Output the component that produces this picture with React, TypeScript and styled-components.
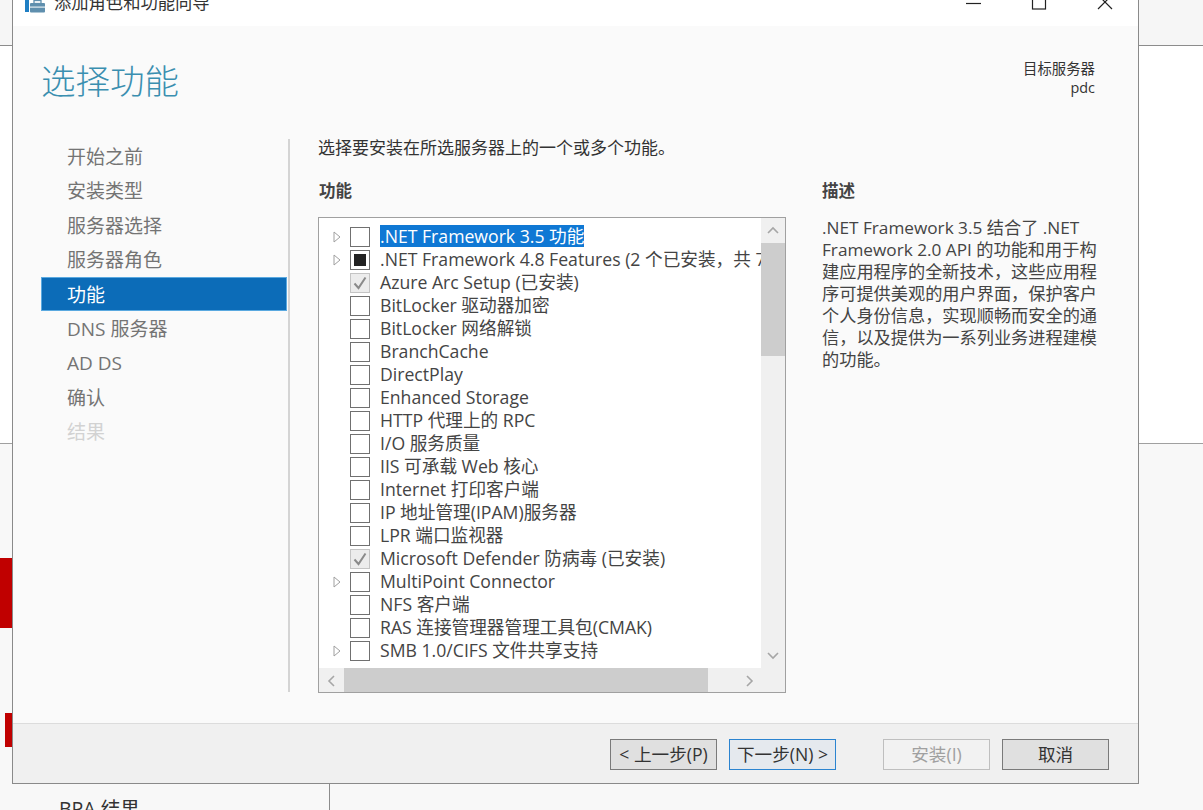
import React from 'react'
import styled, { createGlobalStyle } from 'styled-components'

const Global = createGlobalStyle`
  html, body { margin: 0; padding: 0; height: 100%; overflow: hidden; background: #f8f8f8; }
  body { font-family: "Open Sans", "Noto Sans CJK SC", sans-serif; color: #333; }
`

const Desktop = styled.div`
  position: relative;
  width: 1203px;
  height: 810px;
  overflow: hidden;
  background: #f8f8f8;
  display: grid;
  grid-template-rows: 46px 398px 1fr;
`
const TopBand = styled.div`
  background: #f6f6f6;
  border-bottom: 1px solid #8c8c8c;
`
const WhiteBand = styled.div`
  background: #fff;
  border-bottom: 1px solid #a0a0a0;
`
const BottomBand = styled.div`
  background: #f8f8f8;
`
const RedBlock = styled.div<{ $l: number; $t: number; $h: number; $w: number }>`
  position: absolute;
  left: ${(p) => p.$l}px;
  top: ${(p) => p.$t}px;
  width: ${(p) => p.$w}px;
  height: ${(p) => p.$h}px;
  background: #c00000;
`
const BehindLabel = styled.div`
  position: absolute;
  left: 59px;
  top: 797px;
  font-size: 19.5px;
  line-height: 24px;
  color: #333;
`
const BehindRule = styled.div`
  position: absolute;
  left: 329px;
  top: 784px;
  width: 1px;
  height: 26px;
  background: #8c8c8c;
`

const Window = styled.div`
  position: absolute;
  left: 12px;
  top: -10px;
  width: 1127px;
  height: 794px;
  box-sizing: border-box;
  border: 1px solid #8a8a8a;
  border-top: none;
  background: #fafafa;
  display: flex;
  flex-direction: column;
`
const TitleBar = styled.div`
  height: 36px;
  flex: none;
  background: #fff;
  display: flex;
  align-items: flex-start;
  padding-left: 12px;
`
const TitleIcon = styled.svg`
  width: 20px;
  height: 20px;
  margin-top: 5px;
`
const TitleText = styled.div`
  margin-left: 9px;
  margin-top: 2px;
  font-size: 17.3px;
  line-height: 22px;
  color: #333;
`
const WinButtons = styled.div`
  margin-left: auto;
  display: flex;
  margin-right: 24px;
  gap: 48px;
`
const WinIcon = styled.svg`
  width: 18px;
  height: 20px;
  display: block;
`

const Body = styled.div`
  flex: 1;
  display: flex;
  flex-direction: column;
  min-height: 0;
`
const Header = styled.div`
  height: 111px;
  flex: none;
  display: flex;
  justify-content: space-between;
  padding: 0 43px 0 28px;
`
const PageTitle = styled.h1`
  margin: 30px 0 0;
  font-size: 34.5px;
  line-height: 46px;
  font-weight: 300;
  color: #3a8fb0;
  font-family: "Noto Sans CJK SC", sans-serif;
`
const Target = styled.div`
  margin-top: 33px;
  text-align: right;
  font-size: 14.4px;
  line-height: 19px;
  color: #333;
`

const Columns = styled.div`
  flex: 1;
  display: flex;
  padding-left: 28px;
  min-height: 0;
`
const Side = styled.nav`
  width: 247px;
  flex: none;
  height: 553px;
  border-right: 2px solid #d4d4d4;
  margin-right: 28px;
  margin-top: 2px;
`
const SideItem = styled.div<{ $active?: boolean; $off?: boolean }>`
  width: 246px;
  height: 34.4px;
  box-sizing: border-box;
  padding: 2px 0 0 26px;
  font-size: 19px;
  line-height: 32.4px;
  color: ${(p) => (p.$active ? '#fff' : p.$off ? '#d2d2d2' : '#747474')};
  background: ${(p) => (p.$active ? '#0c6cb8' : 'transparent')};
  box-shadow: ${(p) => (p.$active ? 'inset 0 0 0 1px #5aa9e0' : 'none')};
`

const Main = styled.div`
  width: 468px;
  flex: none;
  display: flex;
  flex-direction: column;
`
const Intro = styled.div`
  font-size: 17px;
  line-height: 22px;
  color: #333;
  height: 22px;
  white-space: nowrap;
`
const SectionHead = styled.div`
  font-size: 16.5px;
  line-height: 22px;
  font-weight: 700;
  color: #444;
`
const ListHead = styled(SectionHead)`
  margin-top: 21px;
  margin-bottom: 15px;
  padding-left: 1px;
`

const ListBox = styled.div`
  width: 468px;
  height: 476px;
  box-sizing: border-box;
  border: 1px solid #a0a0a0;
  background: #fff;
  display: grid;
  grid-template-columns: minmax(0, 1fr) 24px;
  grid-template-rows: minmax(0, 1fr) 24px;
`
const Rows = styled.div`
  overflow: hidden;
  padding-top: 7px;
`
const Row = styled.div`
  height: 23px;
  display: flex;
  align-items: center;
  white-space: nowrap;
  font-size: 17.65px;
  color: #444;
`
const ArrowSlot = styled.div`
  width: 31px;
  flex: none;
  display: flex;
  justify-content: flex-end;
  padding-right: 9px;
  box-sizing: border-box;
`
const CheckBox = styled.div<{ $state?: string }>`
  width: 20px;
  height: 20px;
  flex: none;
  box-sizing: border-box;
  border: 1px solid ${(p) => (p.$state === 'done' ? '#c4c4c4' : '#707070')};
  background: ${(p) => (p.$state === 'done' ? '#ececec' : '#fff')};
  display: flex;
  align-items: center;
  justify-content: center;
  margin-right: 10px;
`
const Dot = styled.div`
  width: 12px;
  height: 12px;
  background: #222;
`
const Label = styled.span<{ $sel?: boolean }>`
  background: ${(p) => (p.$sel ? '#0f78d4' : 'transparent')};
  color: ${(p) => (p.$sel ? '#fff' : 'inherit')};
  line-height: 22px;
  margin-top: -1px;
`

const VBar = styled.div`
  background: #f0f0f0;
  display: flex;
  flex-direction: column;
`
const HBar = styled.div`
  background: #f0f0f0;
  display: flex;
  padding-left: 1px;
`
const Corner = styled.div`
  background: #f0f0f0;
`
const ArrowBtn = styled.div`
  width: 24px;
  height: 25px;
  flex: none;
  display: flex;
  align-items: center;
  justify-content: center;
`
const VThumb = styled.div`
  height: 113px;
  background: #cdcdcd;
`
const HThumb = styled.div`
  width: 364px;
  background: #cdcdcd;
`
const Spacer = styled.div`
  flex: 1;
`

const Desc = styled.div`
  margin-left: 36px;
  width: 290px;
  padding-top: 43px;
`
const DescHead = styled(SectionHead)`
  margin-bottom: 15px;
`
const DescLine = styled.div`
  font-size: 17.2px;
  line-height: 22px;
  white-space: nowrap;
  color: #444;
`

const Footer = styled.div`
  height: 60px;
  flex: none;
  box-sizing: border-box;
  border-top: 1px solid #dcdcdc;
  background: #f0f0f0;
  display: flex;
  padding: 15px 29px 0 0;
  justify-content: flex-end;
`
const Btn = styled.div<{ $kind?: string; $gap?: number }>`
  width: 107px;
  height: 31px;
  box-sizing: border-box;
  margin-left: ${(p) => p.$gap ?? 0}px;
  border: 1px solid ${(p) => (p.$kind === 'focus' ? '#2b84d0' : p.$kind === 'off' ? '#bfbfbf' : '#7a7a7a')};
  background: ${(p) => (p.$kind === 'focus' ? '#e5e9ee' : p.$kind === 'off' ? '#f2f2f2' : '#e0e0e0')};
  color: ${(p) => (p.$kind === 'off' ? '#a0a0a0' : '#333')};
  font-size: 17.6px;
  line-height: 29px;
  text-align: center;
  white-space: nowrap;
`

const rows: { label: string; arrow?: boolean; state?: string; sel?: boolean }[] = [
  { label: '.NET Framework 3.5 功能', arrow: true, sel: true },
  { label: '.NET Framework 4.8 Features (2 个已安装，共 7', arrow: true, state: 'part' },
  { label: 'Azure Arc Setup (已安装)', state: 'done' },
  { label: 'BitLocker 驱动器加密' },
  { label: 'BitLocker 网络解锁' },
  { label: 'BranchCache' },
  { label: 'DirectPlay' },
  { label: 'Enhanced Storage' },
  { label: 'HTTP 代理上的 RPC' },
  { label: 'I/O 服务质量' },
  { label: 'IIS 可承载 Web 核心' },
  { label: 'Internet 打印客户端' },
  { label: 'IP 地址管理(IPAM)服务器' },
  { label: 'LPR 端口监视器' },
  { label: 'Microsoft Defender 防病毒 (已安装)', state: 'done' },
  { label: 'MultiPoint Connector', arrow: true },
  { label: 'NFS 客户端' },
  { label: 'RAS 连接管理器管理工具包(CMAK)' },
  { label: 'SMB 1.0/CIFS 文件共享支持', arrow: true },
]

const steps = ['开始之前', '安装类型', '服务器选择', '服务器角色', '功能', 'DNS 服务器', 'AD DS', '确认', '结果']

const descLines = [
  '.NET Framework 3.5 结合了 .NET',
  'Framework 2.0 API 的功能和用于构',
  '建应用程序的全新技术，这些应用程',
  '序可提供美观的用户界面，保护客户',
  '个人身份信息，实现顺畅而安全的通',
  '信，以及提供为一系列业务进程建模',
  '的功能。',
]

const Chevron = ({ dir }: { dir: 'up' | 'down' | 'left' | 'right' }) => {
  const d = {
    up: 'M2 8 L7 3 L12 8',
    down: 'M2 3 L7 8 L12 3',
    left: 'M9 1 L4 6 L9 11',
    right: 'M5 1 L10 6 L5 11',
  }[dir]
  return (
    <svg width="14" height="12" viewBox="0 0 14 12">
      <path d={d} fill="none" stroke="#a6a6a6" strokeWidth="1.6" />
    </svg>
  )
}

export default function App() {
  return (
    <>
      <Global />
      <Desktop>
        <TopBand />
        <WhiteBand />
        <BottomBand />
        <RedBlock $l={0} $t={558} $w={12} $h={70} />
        <RedBlock $l={5} $t={713} $w={7} $h={34} />
        <BehindLabel>BPA 结果</BehindLabel>
        <BehindRule />
        <Window>
          <TitleBar>
            <TitleIcon viewBox="0 0 20 20">
              <path d="M0 0 H8 V5 H4 V17 H0 Z" fill="#1f7fc4" />
              <rect x="5" y="8" width="15" height="9.5" rx="1" fill="#5f8fae" />
              <rect x="9" y="5.5" width="7" height="3" fill="none" stroke="#5f8fae" strokeWidth="1.3" />
              <rect x="5" y="11.5" width="15" height="1.2" fill="#e4edf2" />
            </TitleIcon>
            <TitleText>添加角色和功能向导</TitleText>
            <WinButtons>
              <WinIcon viewBox="0 0 18 20">
                <path d="M2 13.5 H17" stroke="#222" strokeWidth="1.2" />
              </WinIcon>
              <WinIcon viewBox="0 0 18 20">
                <rect x="2.5" y="5" width="13" height="14" fill="none" stroke="#222" strokeWidth="1.2" />
              </WinIcon>
              <WinIcon viewBox="0 0 18 20">
                <path d="M2 5 L16 19 M16 5 L2 19" stroke="#222" strokeWidth="1.2" />
              </WinIcon>
            </WinButtons>
          </TitleBar>
          <Body>
            <Header>
              <PageTitle>选择功能</PageTitle>
              <Target>
                目标服务器
                <br />
                pdc
              </Target>
            </Header>
            <Columns>
              <Side>
                {steps.map((s) => (
                  <SideItem key={s} $active={s === '功能'} $off={s === '结果'}>
                    {s}
                  </SideItem>
                ))}
              </Side>
              <Main>
                <Intro>选择要安装在所选服务器上的一个或多个功能。</Intro>
                <ListHead>功能</ListHead>
                <ListBox>
                  <Rows>
                    {rows.map((r) => (
                      <Row key={r.label}>
                        <ArrowSlot>
                          {r.arrow && (
                            <svg width="8" height="12" viewBox="0 0 8 12">
                              <path d="M1 1 L7 6 L1 11 Z" fill="#fff" stroke="#a0a0a0" />
                            </svg>
                          )}
                        </ArrowSlot>
                        <CheckBox $state={r.state}>
                          {r.state === 'part' && <Dot />}
                          {r.state === 'done' && (
                            <svg width="16" height="16" viewBox="0 0 16 16">
                              <path d="M2.5 8.5 L6.5 13 L13.5 2.5" fill="none" stroke="#8a8a8a" strokeWidth="2" />
                            </svg>
                          )}
                        </CheckBox>
                        <Label $sel={r.sel}>{r.label}</Label>
                      </Row>
                    ))}
                  </Rows>
                  <VBar>
                    <ArrowBtn>
                      <Chevron dir="up" />
                    </ArrowBtn>
                    <VThumb />
                    <Spacer />
                    <ArrowBtn>
                      <Chevron dir="down" />
                    </ArrowBtn>
                  </VBar>
                  <HBar>
                    <ArrowBtn>
                      <Chevron dir="left" />
                    </ArrowBtn>
                    <HThumb />
                    <Spacer />
                    <ArrowBtn>
                      <Chevron dir="right" />
                    </ArrowBtn>
                  </HBar>
                  <Corner />
                </ListBox>
              </Main>
              <Desc>
                <DescHead>描述</DescHead>
                {descLines.map((l) => (
                  <DescLine key={l}>{l}</DescLine>
                ))}
              </Desc>
            </Columns>
            <Footer>
              <Btn>&lt; 上一步(P)</Btn>
              <Btn $kind="focus" $gap={12}>
                下一步(N) &gt;
              </Btn>
              <Btn $kind="off" $gap={47}>
                安装(I)
              </Btn>
              <Btn $gap={12}>取消</Btn>
            </Footer>
          </Body>
        </Window>
      </Desktop>
    </>
  )
}
